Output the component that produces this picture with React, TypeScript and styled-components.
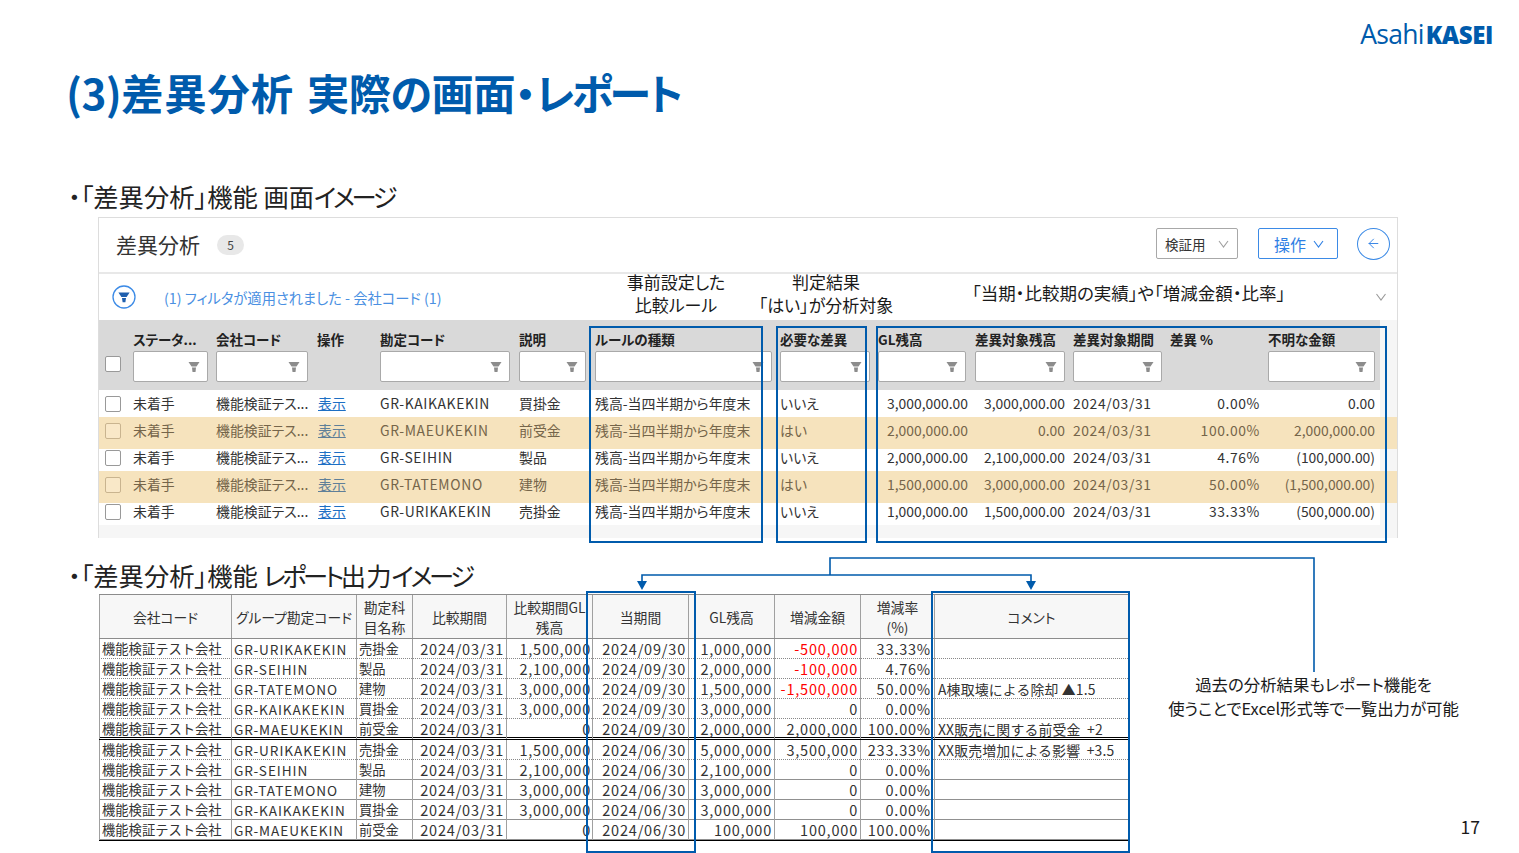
import React from "react";
import styled, { createGlobalStyle } from "styled-components";
import { ArrowLeft } from "lucide-react";

const BLUE = "#005bac";
const FONT = '"Noto Sans CJK JP", "Noto Sans", sans-serif';
const REVIEW_COLUMNS = "34px 83px 101px 63px 139px 76px 185px 98px 97px 98px 97px 98px 112px";
const REPORT_COLUMNS = "132px 125px 56px 94px 86px 96px 86px 86px 74px 194px";

const GlobalStyle = createGlobalStyle`
    html, body {
        margin: 0;
        padding: 0;
        background: #fff;
    }
    body {
        font-family: ${FONT};
        font-feature-settings: "palt";
    }
`;

const Slide = styled.div`
    position: relative;
    width: 1519px;
    height: 853px;
    overflow: hidden;
    background: #fff;
    color: #1a1a1a;
`;

const LogoRow = styled.div`
    display: flex;
    justify-content: flex-end;
    height: 67px;
    padding: 17px 26px 0 0;
    box-sizing: border-box;
`;

const Logo = styled.div`
    font-family: "Open Sans", sans-serif;
    font-size: 26.5px;
    line-height: 34px;
    letter-spacing: -0.7px;
    color: ${BLUE};
    font-feature-settings: normal;

    b {
        margin-left: 2px;
        font-size: 24px;
        font-weight: 800;
        letter-spacing: -0.4px;
    }
`;

const Title = styled.h1`
    margin: 0 0 0 66px;
    height: 116px;
    font-size: 42.3px;
    line-height: 50px;
    font-weight: 700;
    letter-spacing: -0.6px;
    word-spacing: 4px;
    color: ${BLUE};
`;

const TitleWide = styled.span`
    letter-spacing: 0.9px;
`;

const TitleTight = styled.span`
    letter-spacing: -3px;
`;

const SectionHeading = styled.h2`
    margin: 0 0 0 68px;
    height: 32px;
    font-size: 25.3px;
    line-height: 27px;
    font-weight: 400;
    color: #222;
`;

const HeadingKana = styled.span`
    letter-spacing: -3.4px;
`;

const Panel = styled.section`
    position: relative;
    width: 1300px;
    height: 321px;
    margin: 2px 0 24px 98px;
    box-sizing: border-box;
    border: 1px solid #ddd;
    background: #fff;
`;

const PanelHeader = styled.div`
    display: flex;
    align-items: center;
    height: 51px;
    padding: 0 7px 3px 17px;
    border-bottom: 2px solid #e8e8e8;
`;

const PanelTitle = styled.div`
    font-size: 21px;
    color: #333;
`;

const CountBadge = styled.span`
    display: flex;
    align-items: center;
    justify-content: center;
    width: 27px;
    height: 20px;
    margin: 2px auto 0 17px;
    border-radius: 10px;
    background: #e8e8e8;
    font-size: 12px;
    color: #444;
`;

const HeaderButton = styled.div<{ $primary?: boolean }>`
    display: flex;
    align-items: center;
    justify-content: space-between;
    box-sizing: border-box;
    height: 31px;
    width: ${(p) => (p.$primary ? "80px" : "82px")};
    margin-right: 20px;
    padding: ${(p) => (p.$primary ? "0 13px 0 15px" : "0 8px 0 8px")};
    border: 1px solid ${(p) => (p.$primary ? "#3b8ae6" : "#a8a8a8")};
    border-radius: 2px;
    font-size: ${(p) => (p.$primary ? "16px" : "13.5px")};
    color: ${(p) => (p.$primary ? "#2f80e4" : "#333")};

    svg {
        color: ${(p) => (p.$primary ? "#2f80e4" : "#a0a0a0")};
    }
`;

const BackButton = styled.div`
    display: flex;
    align-items: center;
    justify-content: center;
    box-sizing: border-box;
    width: 33px;
    height: 32px;
    margin-left: -1px;
    border: 1px solid #3b8ae6;
    border-radius: 50%;
    color: #2f80e4;
`;

const FilterBar = styled.div`
    display: flex;
    align-items: center;
    height: 46px;
    padding: 0 10px 0 13px;
    color: #4a90e2;
    font-size: 14.3px;
`;

const FilterText = styled.span`
    margin: 0 auto 0 28px;
`;

const FilterChevron = styled.span`
    display: flex;
    color: #999;
`;

const Annotation = styled.div<{ $left: number; $top: number; $width: number }>`
    position: absolute;
    left: ${(p) => p.$left}px;
    top: ${(p) => p.$top}px;
    width: ${(p) => p.$width}px;
    text-align: center;
    font-size: 17px;
    line-height: 23px;
    color: #1a1a1a;
    white-space: nowrap;
`;

const WideAnnotation = styled(Annotation)`
    font-size: 17.5px;
`;

const TableArea = styled.div`
    background: #f6f6f6;
    height: 218px;
`;

const HeadRow = styled.div`
    display: grid;
    grid-template-columns: ${REVIEW_COLUMNS};
    width: 1281px;
    height: 70px;
    background: #d9d9d9;
`;

const HeadCell = styled.div`
    display: flex;
    flex-direction: column;
    align-items: flex-start;
    padding-top: 9px;
    font-size: 13.5px;
    line-height: 20px;
    font-weight: 700;
    color: #222;
    white-space: nowrap;
`;

const HeadCheck = styled.div`
    padding: 36px 0 0 6px;
`;

const FilterInput = styled.div<{ $width: number }>`
    display: flex;
    align-items: center;
    justify-content: flex-end;
    box-sizing: border-box;
    width: ${(p) => p.$width}px;
    height: 31px;
    margin-top: 2px;
    padding-right: 7px;
    background: #fff;
    border: 1px solid #a9a9a9;
    border-radius: 2px;
    color: #8c8c8c;
`;

const CheckBox = styled.span<{ $flagged?: boolean }>`
    display: block;
    box-sizing: border-box;
    width: 16px;
    height: 16px;
    border: 1px solid ${(p) => (p.$flagged ? "#c9b48f" : "#999")};
    border-radius: 2px;
    background: ${(p) => (p.$flagged ? "#f9e8c8" : "#fff")};
`;

const DataRow = styled.div<{ $flagged?: boolean }>`
    position: relative;
    z-index: ${(p) => (p.$flagged ? 1 : 0)};
    display: grid;
    grid-template-columns: ${REVIEW_COLUMNS};
    align-items: center;
    box-sizing: border-box;
    height: ${(p) => (p.$flagged ? "32px" : "27px")};
    width: ${(p) => (p.$flagged ? "1298px" : "1281px")};
    margin-bottom: ${(p) => (p.$flagged ? "-5px" : "0")};
    padding-bottom: ${(p) => (p.$flagged ? "5px" : "0")};
    background: ${(p) => (p.$flagged ? "#f6e3bd" : "#fff")};
    color: ${(p) => (p.$flagged ? "#75654a" : "#333")};
    font-size: 13.9px;
`;

const DataCell = styled.div<{ $right?: number }>`
    margin-top: -2px;
    text-align: ${(p) => (p.$right !== undefined ? "right" : "left")};
    padding-right: ${(p) => p.$right ?? 0}px;
    white-space: nowrap;
`;

const CheckCell = styled.div`
    padding-left: 6px;
`;

const CodeCell = styled(DataCell)`
    letter-spacing: 0.65px;
`;

const DateCell = styled(DataCell)`
    letter-spacing: 0.6px;
`;

const PctCell = styled(DataCell)`
    letter-spacing: 0.6px;
`;

const ShowLink = styled.span<{ $flagged?: boolean }>`
    margin-left: 1px;
    color: ${(p) => (p.$flagged ? "#5f7f98" : "#1d6fc4")};
    text-decoration: underline;
`;

const OutlineBox = styled.div<{ $left: number; $top: number; $width: number; $height: number }>`
    position: absolute;
    z-index: 2;
    left: ${(p) => p.$left}px;
    top: ${(p) => p.$top}px;
    width: ${(p) => p.$width}px;
    height: ${(p) => p.$height}px;
    box-sizing: border-box;
    border: 2px solid ${BLUE};
    pointer-events: none;
`;

const ReportRow = styled.div`
    display: flex;
    margin-left: 99px;
    height: 259px;
`;

const ReportTable = styled.div`
    display: flex;
    flex-direction: column;
    box-sizing: border-box;
    width: 1029px;
    height: 247px;
    font-size: 13.3px;
    border-bottom: 1px solid #000;
`;

const ReportHead = styled.div`
    display: grid;
    grid-template-columns: ${REPORT_COLUMNS};
    height: 46px;
    box-sizing: border-box;
    border-top: 1px solid #8c8c8c;
    border-bottom: 1px solid #8c8c8c;
    background: #f7f7f7;
`;

const ReportHeadCell = styled.div`
    display: flex;
    align-items: center;
    justify-content: center;
    box-sizing: border-box;
    border-left: 1px solid #a0a0a0;
    text-align: center;
    line-height: 20px;
    font-size: 13.8px;
    color: #333;
    white-space: nowrap;
`;

const ReportLine = styled.div<{ $line: string }>`
    display: grid;
    grid-template-columns: ${REPORT_COLUMNS};
    height: ${(p) => (p.$line === "double" ? "21px" : "20px")};
    box-sizing: border-box;
    border-bottom: ${(p) =>
        p.$line === "double"
            ? "3px double #000"
            : p.$line === "dotted"
            ? "1px dotted #888"
            : "1px solid #909090"};
`;

const ReportCell = styled.div`
    box-sizing: border-box;
    border-left: 1px solid #a0a0a0;
    padding: 0 2px;
    color: #333;
    line-height: 20px;
    white-space: nowrap;
    font-feature-settings: normal;
`;

const ReportCode = styled(ReportCell)`
    font-size: 13.6px;
    letter-spacing: 0.95px;
`;

const ReportNumber = styled(ReportCell)<{ $red?: boolean; $right?: number }>`
    padding-right: ${(p) => p.$right ?? 2}px;
    text-align: right;
    font-size: 14.5px;
    letter-spacing: 0.8px;
    color: ${(p) => (p.$red ? "#ff0000" : "#333")};
`;

const ReportComment = styled(ReportCell)`
    padding-left: 3px;
    font-size: 13.9px;
    letter-spacing: 0.15px;
`;

const SideColumn = styled.aside`
    display: flex;
    flex-direction: column;
    align-items: center;
    flex: 1;
    padding-right: 20px;
`;

const SideNote = styled.div`
    margin-top: 78px;
    text-align: center;
    font-size: 16.4px;
    line-height: 24px;
    white-space: nowrap;
`;

const PageNumber = styled.div`
    align-self: flex-end;
    margin: 97px 19px 0 0;
    font-size: 17.5px;
    line-height: 20px;
    font-feature-settings: normal;
`;

const Connector = styled.svg`
    position: absolute;
    z-index: 3;
    left: 630px;
    top: 550px;
    width: 700px;
    height: 130px;
    overflow: visible;
`;

const Funnel = () => (
    <svg width="12" height="12" viewBox="0 0 12 12" fill="currentColor">
        <path d="M0.5 1h11l-3 4.6h-5z" />
        <path d="M4 6.5h4l-.5 4.5h-3z" />
    </svg>
);

const Chevron = ({ width = 11 }: { width?: number }) => (
    <svg width={width} height="8" viewBox="0 0 11 8" fill="none" stroke="currentColor" strokeWidth="1.1">
        <path d="M1 1l4.5 6L10 1" />
    </svg>
);

const FilterBadge = () => (
    <svg width="24" height="24" viewBox="0 0 24 24">
        <circle cx="12" cy="12" r="11" fill="#fff" stroke="#3b8ae6" strokeWidth="1.3" />
        <path d="M6.4 7.5h11.2l-3 4.6h-5.2z" fill="#1f5fae" />
        <path d="M10 13h4l-.6 4.2h-2.8z" fill="#1f5fae" />
    </svg>
);

const reviewRows = [
    { code: "GR-KAIKAKEKIN", desc: "買掛金", flagged: false, answer: "いいえ", gl: "3,000,000.00", target: "3,000,000.00", pct: "0.00%", unknown: "0.00" },
    { code: "GR-MAEUKEKIN", desc: "前受金", flagged: true, answer: "はい", gl: "2,000,000.00", target: "0.00", pct: "100.00%", unknown: "2,000,000.00" },
    { code: "GR-SEIHIN", desc: "製品", flagged: false, answer: "いいえ", gl: "2,000,000.00", target: "2,100,000.00", pct: "4.76%", unknown: "(100,000.00)" },
    { code: "GR-TATEMONO", desc: "建物", flagged: true, answer: "はい", gl: "1,500,000.00", target: "3,000,000.00", pct: "50.00%", unknown: "(1,500,000.00)" },
    { code: "GR-URIKAKEKIN", desc: "売掛金", flagged: false, answer: "いいえ", gl: "1,000,000.00", target: "1,500,000.00", pct: "33.33%", unknown: "(500,000.00)" },
];

const headColumns = [
    { label: "ステータ...", filter: 75 },
    { label: "会社コード", filter: 92 },
    { label: "操作", filter: 0 },
    { label: "勘定コード", filter: 130 },
    { label: "説明", filter: 67 },
    { label: "ルールの種類", filter: 177 },
    { label: "必要な差異", filter: 90 },
    { label: "GL残高", filter: 88 },
    { label: "差異対象残高", filter: 90 },
    { label: "差異対象期間", filter: 89 },
    { label: "差異 %", filter: 0 },
    { label: "不明な金額", filter: 107 },
];

const reportRows = [
    { code: "GR-URIKAKEKIN", name: "売掛金", prev: "1,500,000", date: "2024/09/30", gl: "1,000,000", diff: "-500,000", rate: "33.33%", comment: "", line: "dotted", red: true },
    { code: "GR-SEIHIN", name: "製品", prev: "2,100,000", date: "2024/09/30", gl: "2,000,000", diff: "-100,000", rate: "4.76%", comment: "", line: "dotted", red: true },
    { code: "GR-TATEMONO", name: "建物", prev: "3,000,000", date: "2024/09/30", gl: "1,500,000", diff: "-1,500,000", rate: "50.00%", comment: "A棟取壊による除却 ▲1.5", line: "dotted", red: true },
    { code: "GR-KAIKAKEKIN", name: "買掛金", prev: "3,000,000", date: "2024/09/30", gl: "3,000,000", diff: "0", rate: "0.00%", comment: "", line: "dotted", red: false },
    { code: "GR-MAEUKEKIN", name: "前受金", prev: "0", date: "2024/09/30", gl: "2,000,000", diff: "2,000,000", rate: "100.00%", comment: "XX販売に関する前受金\u00a0 +2", line: "double", red: false },
    { code: "GR-URIKAKEKIN", name: "売掛金", prev: "1,500,000", date: "2024/06/30", gl: "5,000,000", diff: "3,500,000", rate: "233.33%", comment: "XX販売増加による影響\u00a0 +3.5", line: "dotted", red: false },
    { code: "GR-SEIHIN", name: "製品", prev: "2,100,000", date: "2024/06/30", gl: "2,100,000", diff: "0", rate: "0.00%", comment: "", line: "solid", red: false },
    { code: "GR-TATEMONO", name: "建物", prev: "3,000,000", date: "2024/06/30", gl: "3,000,000", diff: "0", rate: "0.00%", comment: "", line: "solid", red: false },
    { code: "GR-KAIKAKEKIN", name: "買掛金", prev: "3,000,000", date: "2024/06/30", gl: "3,000,000", diff: "0", rate: "0.00%", comment: "", line: "solid", red: false },
    { code: "GR-MAEUKEKIN", name: "前受金", prev: "0", date: "2024/06/30", gl: "100,000", diff: "100,000", rate: "100.00%", comment: "", line: "solid", red: false },
];

const App = () => {
    return (
        <Slide>
            <GlobalStyle />
            <LogoRow>
                <Logo>
                    Asahi<b>KASEI</b>
                </Logo>
            </LogoRow>
            <Title>
                (3)<TitleWide>差異分析</TitleWide> 実際の画面・<TitleTight>レポート</TitleTight>
            </Title>
            <SectionHeading>
                ・「差異分析」機能 画面<HeadingKana>イメージ</HeadingKana>
            </SectionHeading>

            <Panel>
                <PanelHeader>
                    <PanelTitle>差異分析</PanelTitle>
                    <CountBadge>5</CountBadge>
                    <HeaderButton>
                        検証用 <Chevron />
                    </HeaderButton>
                    <HeaderButton $primary>
                        操作 <Chevron />
                    </HeaderButton>
                    <BackButton>
                        <ArrowLeft size={15} strokeWidth={1.5} />
                    </BackButton>
                </PanelHeader>

                <FilterBar>
                    <FilterBadge />
                    <FilterText>(1) フィルタが適用されました - 会社コード (1)</FilterText>
                    <FilterChevron>
                        <Chevron width={12} />
                    </FilterChevron>
                </FilterBar>

                <Annotation $left={477} $top={52} $width={200}>
                    事前設定した
                    <br />
                    比較ルール
                </Annotation>
                <Annotation $left={627} $top={52} $width={200}>
                    判定結果
                    <br />
                    「はい」が分析対象
                </Annotation>
                <WideAnnotation $left={873} $top={63} $width={313}>
                    「当期・比較期の実績」や「増減金額・比率」
                </WideAnnotation>

                <TableArea>
                    <HeadRow>
                        <HeadCheck>
                            <CheckBox />
                        </HeadCheck>
                        {headColumns.map((col) => (
                            <HeadCell key={col.label}>
                                {col.label}
                                {col.filter > 0 && (
                                    <FilterInput $width={col.filter}>
                                        <Funnel />
                                    </FilterInput>
                                )}
                            </HeadCell>
                        ))}
                    </HeadRow>

                    {reviewRows.map((row) => (
                        <DataRow key={row.code} $flagged={row.flagged}>
                            <CheckCell>
                                <CheckBox $flagged={row.flagged} />
                            </CheckCell>
                            <DataCell>未着手</DataCell>
                            <DataCell>機能検証テス...</DataCell>
                            <DataCell>
                                <ShowLink $flagged={row.flagged}>表示</ShowLink>
                            </DataCell>
                            <CodeCell>{row.code}</CodeCell>
                            <DataCell>{row.desc}</DataCell>
                            <DataCell>残高-当四半期から年度末</DataCell>
                            <DataCell>{row.answer}</DataCell>
                            <DataCell $right={7}>{row.gl}</DataCell>
                            <DataCell $right={8}>{row.target}</DataCell>
                            <DateCell>2024/03/31</DateCell>
                            <PctCell $right={8}>{row.pct}</PctCell>
                            <DataCell $right={5}>{row.unknown}</DataCell>
                        </DataRow>
                    ))}
                </TableArea>
            </Panel>

            <SectionHeading>
                ・「差異分析」機能 <HeadingKana>レポート</HeadingKana>出力<HeadingKana>イメージ</HeadingKana>
            </SectionHeading>

            <ReportRow>
                <ReportTable>
                    <ReportHead>
                        <ReportHeadCell>会社コード</ReportHeadCell>
                        <ReportHeadCell>グループ勘定コード</ReportHeadCell>
                        <ReportHeadCell>
                            勘定科
                            <br />
                            目名称
                        </ReportHeadCell>
                        <ReportHeadCell>比較期間</ReportHeadCell>
                        <ReportHeadCell>
                            比較期間GL
                            <br />
                            残高
                        </ReportHeadCell>
                        <ReportHeadCell>当期間</ReportHeadCell>
                        <ReportHeadCell>GL残高</ReportHeadCell>
                        <ReportHeadCell>増減金額</ReportHeadCell>
                        <ReportHeadCell>
                            増減率
                            <br />
                            (%)
                        </ReportHeadCell>
                        <ReportHeadCell>コメント</ReportHeadCell>
                    </ReportHead>
                    {reportRows.map((r, i) => (
                        <ReportLine key={i} $line={r.line}>
                            <ReportCell>機能検証テスト会社</ReportCell>
                            <ReportCode>{r.code}</ReportCode>
                            <ReportCell>{r.name}</ReportCell>
                            <ReportNumber>2024/03/31</ReportNumber>
                            <ReportNumber $right={1}>{r.prev}</ReportNumber>
                            <ReportNumber>{r.date}</ReportNumber>
                            <ReportNumber>{r.gl}</ReportNumber>
                            <ReportNumber $red={r.red}>{r.diff}</ReportNumber>
                            <ReportNumber $right={3}>{r.rate}</ReportNumber>
                            <ReportComment>{r.comment}</ReportComment>
                        </ReportLine>
                    ))}
                </ReportTable>
                <SideColumn>
                    <SideNote>
                        過去の分析結果もレポート機能を
                        <br />
                        使うことでExcel形式等で一覧出力が可能
                    </SideNote>
                    <PageNumber>17</PageNumber>
                </SideColumn>
            </ReportRow>

            <OutlineBox $left={589} $top={326} $width={174} $height={217} />
            <OutlineBox $left={776} $top={326} $width={91} $height={217} />
            <OutlineBox $left={876} $top={326} $width={511} $height={217} />
            <OutlineBox $left={586} $top={591} $width={110} $height={262} />
            <OutlineBox $left={931} $top={591} $width={199} $height={262} />

            <Connector viewBox="630 550 700 130">
                <path
                    d="M642 582V575H1031V582M830 575V558H1314V672"
                    fill="none"
                    stroke={BLUE}
                    strokeWidth="1.6"
                />
                <path d="M637 581h10l-5 9zM1026 581h10l-5 9z" fill={BLUE} />
            </Connector>
        </Slide>
    );
};

export default App;
